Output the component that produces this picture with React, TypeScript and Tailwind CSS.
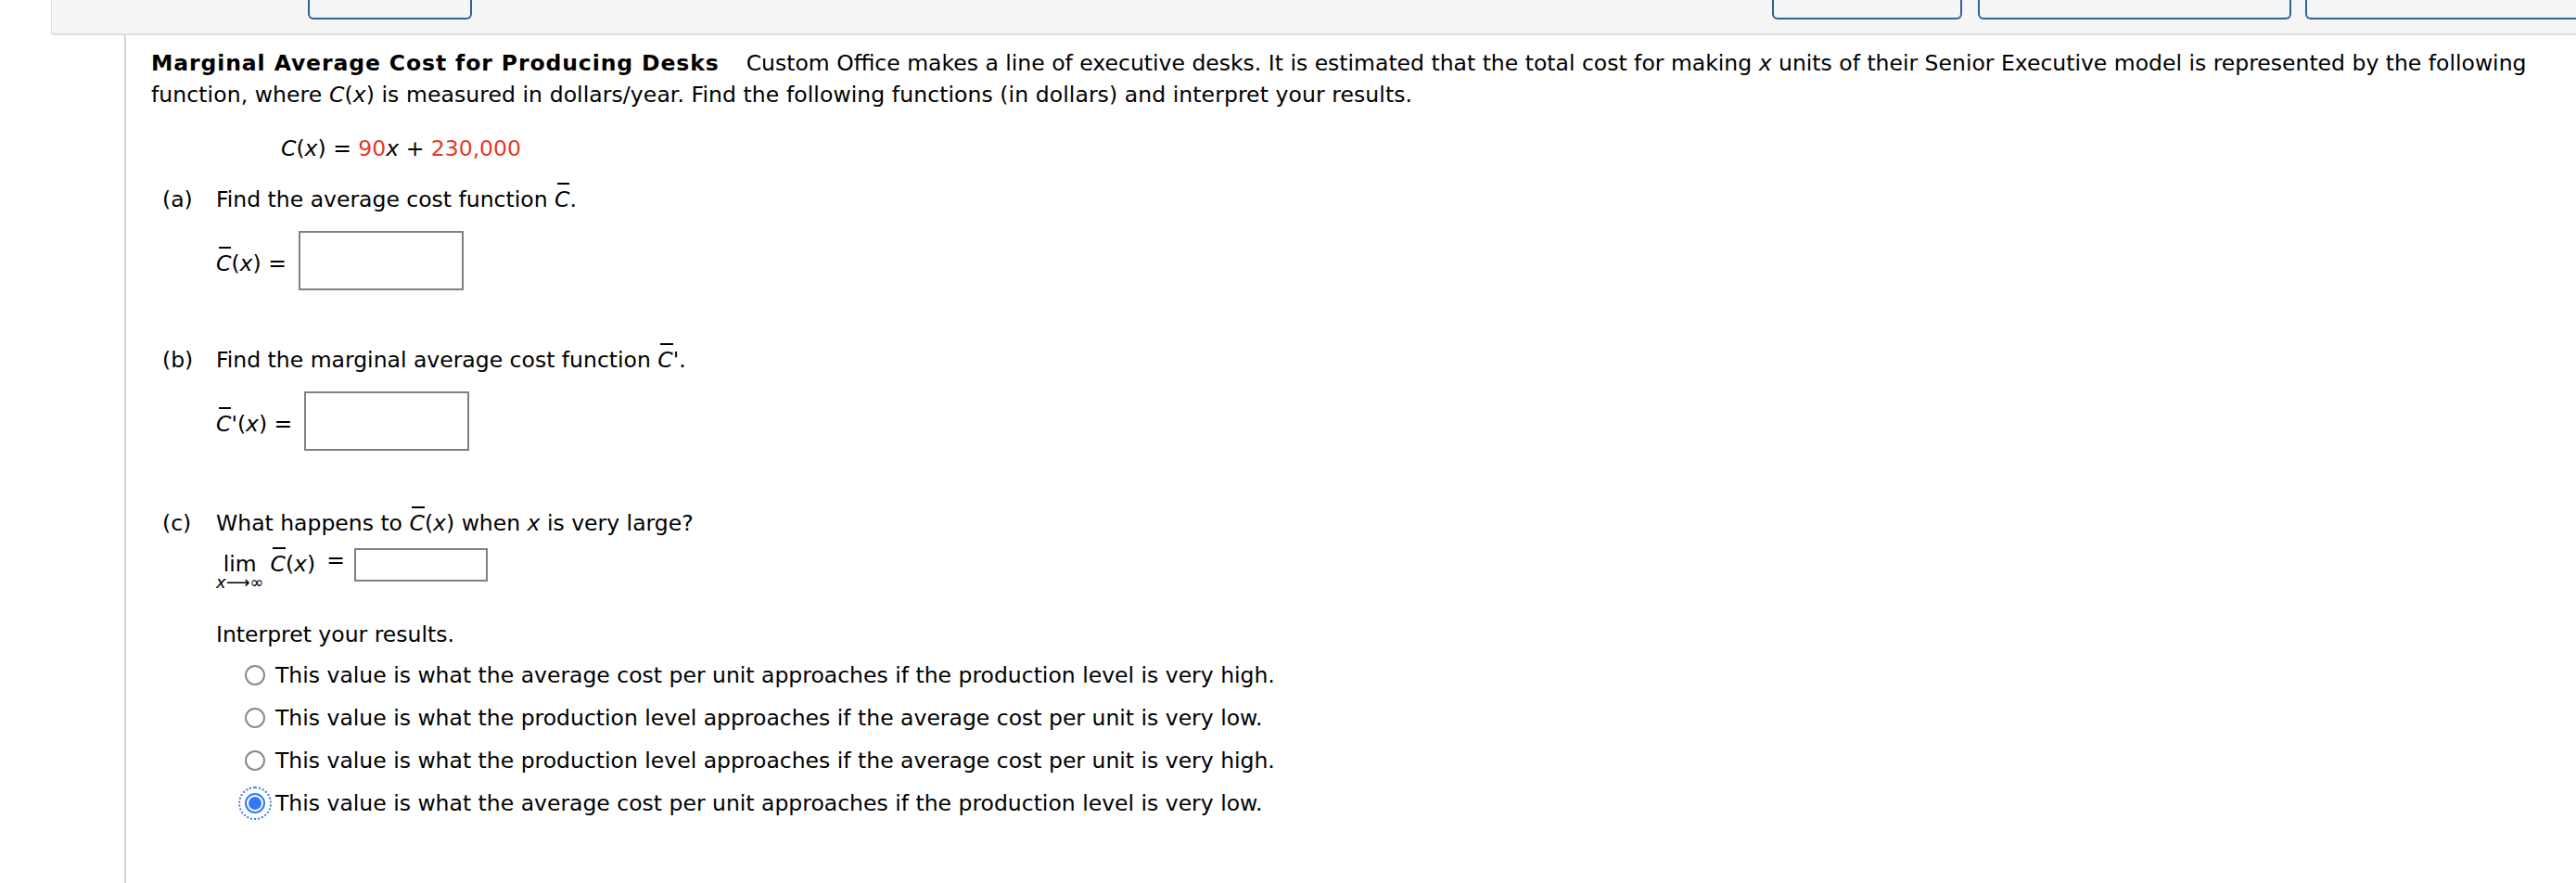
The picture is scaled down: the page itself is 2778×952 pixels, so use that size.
function CBar({ prime = false }: { prime?: boolean }) {
  // C with a bar over it, as in the average cost notation
  return (
    <>
      <span className="relative inline-block">
        <span className="absolute left-[3px] right-[0px] top-[-1px] h-[2px] bg-black" />
        <i>C</i>
      </span>
      {prime && "'"}
    </>
  );
}

function Radio({ checked = false }: { checked?: boolean }) {
  if (checked) {
    return (
      <span className="inline-flex w-[22px] h-[22px] shrink-0 rounded-full border-2 border-[#3479f4] p-[2px] bg-white outline-2 outline-dotted outline-[#3b7be8] outline-offset-[5px]">
        <span className="w-full h-full rounded-full bg-[#3479f4]" />
      </span>
    );
  }
  return <span className="inline-block w-[22px] h-[22px] shrink-0 rounded-full border-2 border-[#8a8a8a] bg-white" />;
}

const options = [
  { text: "This value is what the average cost per unit approaches if the production level is very high.", checked: false },
  { text: "This value is what the production level approaches if the average cost per unit is very low.", checked: false },
  { text: "This value is what the production level approaches if the average cost per unit is very high.", checked: false },
  { text: "This value is what the average cost per unit approaches if the production level is very low.", checked: true },
];

export default function App() {
  return (
    <div className="w-[2778px] h-[952px] overflow-hidden bg-white text-black font-['DejaVu_Sans',Verdana,sans-serif]">
      {/* top toolbar, mostly scrolled out of view */}
      <div className="ml-[55px] h-[38px] bg-[#f5f5f5] border-b-2 border-l border-[#dedede] rounded-bl-[3px] flex items-start overflow-hidden">
        <div className="ml-[87px] w-[3px] h-[5px] bg-[#444]" />
        <div className="ml-[147px] w-[3px] h-[5px] bg-[#444]" />
        <div className="ml-[42px] w-[177px] h-[21px] shrink-0 border-2 border-t-0 border-[#2e6399] rounded-b-[6px]" />
        <div className="ml-[1402px] w-[205px] h-[21px] shrink-0 border-2 border-t-0 border-[#2e6399] rounded-b-[6px]" />
        <div className="ml-[17px] w-[338px] h-[21px] shrink-0 border-2 border-t-0 border-[#2e6399] rounded-b-[6px]" />
        <div className="ml-[15px] w-[340px] h-[21px] shrink-0 border-2 border-t-0 border-[#2e6399] rounded-b-[6px]" />
      </div>

      <div className="ml-[134px] h-[914px] border-l-2 border-[#d3d3d3] pl-[27px] pt-[13px] text-[23.5px] leading-[34px]">
        <p className="whitespace-nowrap">
          <b className="font-bold tracking-[0.9px]">Marginal Average Cost for Producing Desks</b>
          <span className="ml-[29px]">
            Custom Office makes a line of executive desks. It is estimated that the total cost for making <i>x</i> units of their Senior Executive model is represented by the following
          </span>
        </p>
        <p className="whitespace-nowrap tracking-[0.08px]">
          function, where <i>C</i>(<i>x</i>) is measured in dollars/year. Find the following functions (in dollars) and interpret your results.
        </p>

        <p className="mt-[24px] pl-[140px] whitespace-nowrap">
          <i>C</i>(<i>x</i>) = <span className="text-[#e8392b]">90</span><i>x</i> + <span className="text-[#e8392b]">230,000</span>
        </p>

        {/* part (a) */}
        <div className="mt-[21px] pl-[12px]">
          <div className="flex">
            <span className="w-[58px]">(a)</span>
            <span>
              Find the average cost function <CBar />.
            </span>
          </div>
          <div className="mt-[17px] pl-[58px] flex items-center">
            <span className="pt-[6px]">
              <CBar />(<i>x</i>) =
            </span>
            <span className="ml-[13px] w-[178px] h-[64px] border-2 border-[#808080] bg-white" />
          </div>
        </div>

        {/* part (b) */}
        <div className="mt-[58px] pl-[12px]">
          <div className="flex">
            <span className="w-[58px]">(b)</span>
            <span>
              Find the marginal average cost function <CBar prime />.
            </span>
          </div>
          <div className="mt-[17px] pl-[58px] flex items-center">
            <span className="pt-[6px]">
              <CBar prime />(<i>x</i>) =
            </span>
            <span className="ml-[13px] w-[178px] h-[64px] border-2 border-[#808080] bg-white" />
          </div>
        </div>

        {/* part (c) */}
        <div className="mt-[61px] pl-[12px]">
          <div className="flex">
            <span className="w-[58px]">(c)</span>
            <span>
              What happens to <CBar />(<i>x</i>) when <i>x</i> is very large?
            </span>
          </div>
          <div className="mt-[10px] pl-[58px] flex items-start">
            <span className="flex flex-col items-center">
              <span>lim</span>
              <span className="-mt-[6px] text-[18px] leading-[18px] whitespace-nowrap">
                <i>x</i>⟶∞
              </span>
            </span>
            <span className="ml-[7px] whitespace-nowrap">
              <CBar />(<i>x</i>)
            </span>
            <span className="ml-[12px] -mt-[4px]">=</span>
            <span className="ml-[10px] w-[144px] h-[36px] border-2 border-[#808080] bg-white" />
          </div>

          <p className="mt-[30px] pl-[58px]">Interpret your results.</p>

          <div className="mt-[10px] pl-[89px] flex flex-col gap-[12px]">
            {options.map((o) => (
              <label key={o.text} className="flex items-center gap-[11px] whitespace-nowrap">
                <Radio checked={o.checked} />
                <span>{o.text}</span>
              </label>
            ))}
          </div>
        </div>
      </div>
    </div>
  );
}
